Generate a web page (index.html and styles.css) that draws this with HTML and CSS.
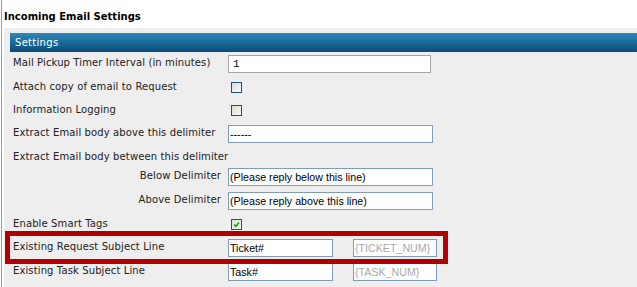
FILE: index.html
```html
<!DOCTYPE html>
<html lang="en">
<head>
  <meta charset="UTF-8">
  <title>Incoming Email Settings</title>
  <link rel="stylesheet" href="styles.css">
</head>
<body>

  <div class="page">
    <div class="page-title">Incoming Email Settings</div>

    <!-- SETTINGS PANEL -->
    <div class="panel">
      <div class="panel-head">Settings</div>
      <table class="settings">
        <tr>
          <td class="lbl">Mail Pickup Timer Interval (in minutes)</td>
          <td><input type="text" class="txt txt-timer" value="1"></td>
        </tr>
        <tr>
          <td class="lbl">Attach copy of email to Request</td>
          <td><input type="checkbox" class="chk"></td>
        </tr>
        <tr>
          <td class="lbl">Information Logging</td>
          <td><input type="checkbox" class="chk"></td>
        </tr>
        <tr>
          <td class="lbl">Extract Email body above this delimiter</td>
          <td><input type="text" class="txt txt-wide" value="------"></td>
        </tr>
        <tr>
          <td class="lbl" colspan="2">Extract Email body between this delimiter</td>
        </tr>
        <tr>
          <td class="lbl lbl-right">Below Delimiter</td>
          <td><input type="text" class="txt txt-wide" value="(Please reply below this line)"></td>
        </tr>
        <tr>
          <td class="lbl lbl-right">Above Delimiter</td>
          <td><input type="text" class="txt txt-wide" value="(Please reply above this line)"></td>
        </tr>
        <tr>
          <td class="lbl">Enable Smart Tags</td>
          <td><input type="checkbox" class="chk" checked></td>
        </tr>
        <tr>
          <td class="lbl hl-cell">Existing Request Subject Line<span class="highlight"></span></td>
          <td>
            <div class="pair">
              <input type="text" class="txt txt-subject" value="Ticket#">
              <input type="text" class="txt txt-token" placeholder="{TICKET_NUM}">
            </div>
          </td>
        </tr>
        <tr>
          <td class="lbl">Existing Task Subject Line</td>
          <td>
            <div class="pair">
              <input type="text" class="txt txt-subject" value="Task#">
              <input type="text" class="txt txt-token" placeholder="{TASK_NUM}">
            </div>
          </td>
        </tr>
      </table>
    </div>
  </div>

</body>
</html>
```

FILE: styles.css
```css
html, body { margin: 0; height: 100%; background: #fff; overflow: hidden; }
body { font-family: "DejaVu Sans", Verdana, sans-serif; font-size: 10px; color: #222; }

.page {
  margin-left: 1px; padding-left: 2px; min-height: 100%;
  border-left: 1px solid #9c9c9c;
}
.page-title {
  font-weight: bold; color: #000; line-height: 14px;
  padding-top: 10px; margin-bottom: 4px;
}

.panel { background: #eee; padding: 5px 0 40px 6px; }
.panel-head {
  height: 19px; line-height: 19px; padding-left: 5px;
  color: #fff; letter-spacing: 0.3px;
  background: linear-gradient(#2c89bb, #0a4b78);
}

.settings { border-collapse: collapse; }
.settings td { padding: 3px; vertical-align: top; line-height: 13px; }
.settings td.lbl {
  width: 208px; white-space: nowrap; letter-spacing: 0.12px;
  padding-top: 4px; padding-bottom: 2px;
}
.settings td.lbl-right { text-align: right; padding-right: 4px; }
.hl-cell { position: relative; }

/* red annotation box around the request subject row */
.highlight {
  position: absolute; left: -5px; top: -5px;
  width: 443px; height: 33px; box-sizing: border-box;
  border: 5px solid #b20000; pointer-events: none;
}

.txt {
  display: block; box-sizing: border-box; height: 18px; margin: 0;
  padding: 0 1px; border: 1px solid #7f9db9; background: #fff;
  font-family: "Liberation Sans", Arial, sans-serif; font-size: 8pt; color: #000;
}
.txt-timer {
  width: 203px; border-color: #a5a5a5; padding-left: 4px;
  font-family: "Liberation Mono", "Courier New", monospace; font-size: 11px;
}
.txt-wide { width: 205px; }
.txt-subject { width: 105px; }
.txt-token { width: 84px; }
.txt-token::placeholder { color: #aaa; }

.pair { display: flex; gap: 20px; }

.chk {
  appearance: none; -webkit-appearance: none; display: block;
  width: 11px; height: 11px; margin: 3px 0 3px 3px;
  border: 1px solid #1c5180; box-sizing: border-box;
  background: linear-gradient(135deg, #dcdcd6, #fafaf8);
}
.chk:checked {
  background: url("data:image/svg+xml,%3Csvg xmlns='http://www.w3.org/2000/svg' width='9' height='9'%3E%3Cpath d='M2 4.5 L3.8 6.5 L7 2.5' fill='none' stroke='%2321a121' stroke-width='1.7'/%3E%3C/svg%3E") no-repeat center,
              linear-gradient(135deg, #dcdcd6, #fafaf8);
}
```
